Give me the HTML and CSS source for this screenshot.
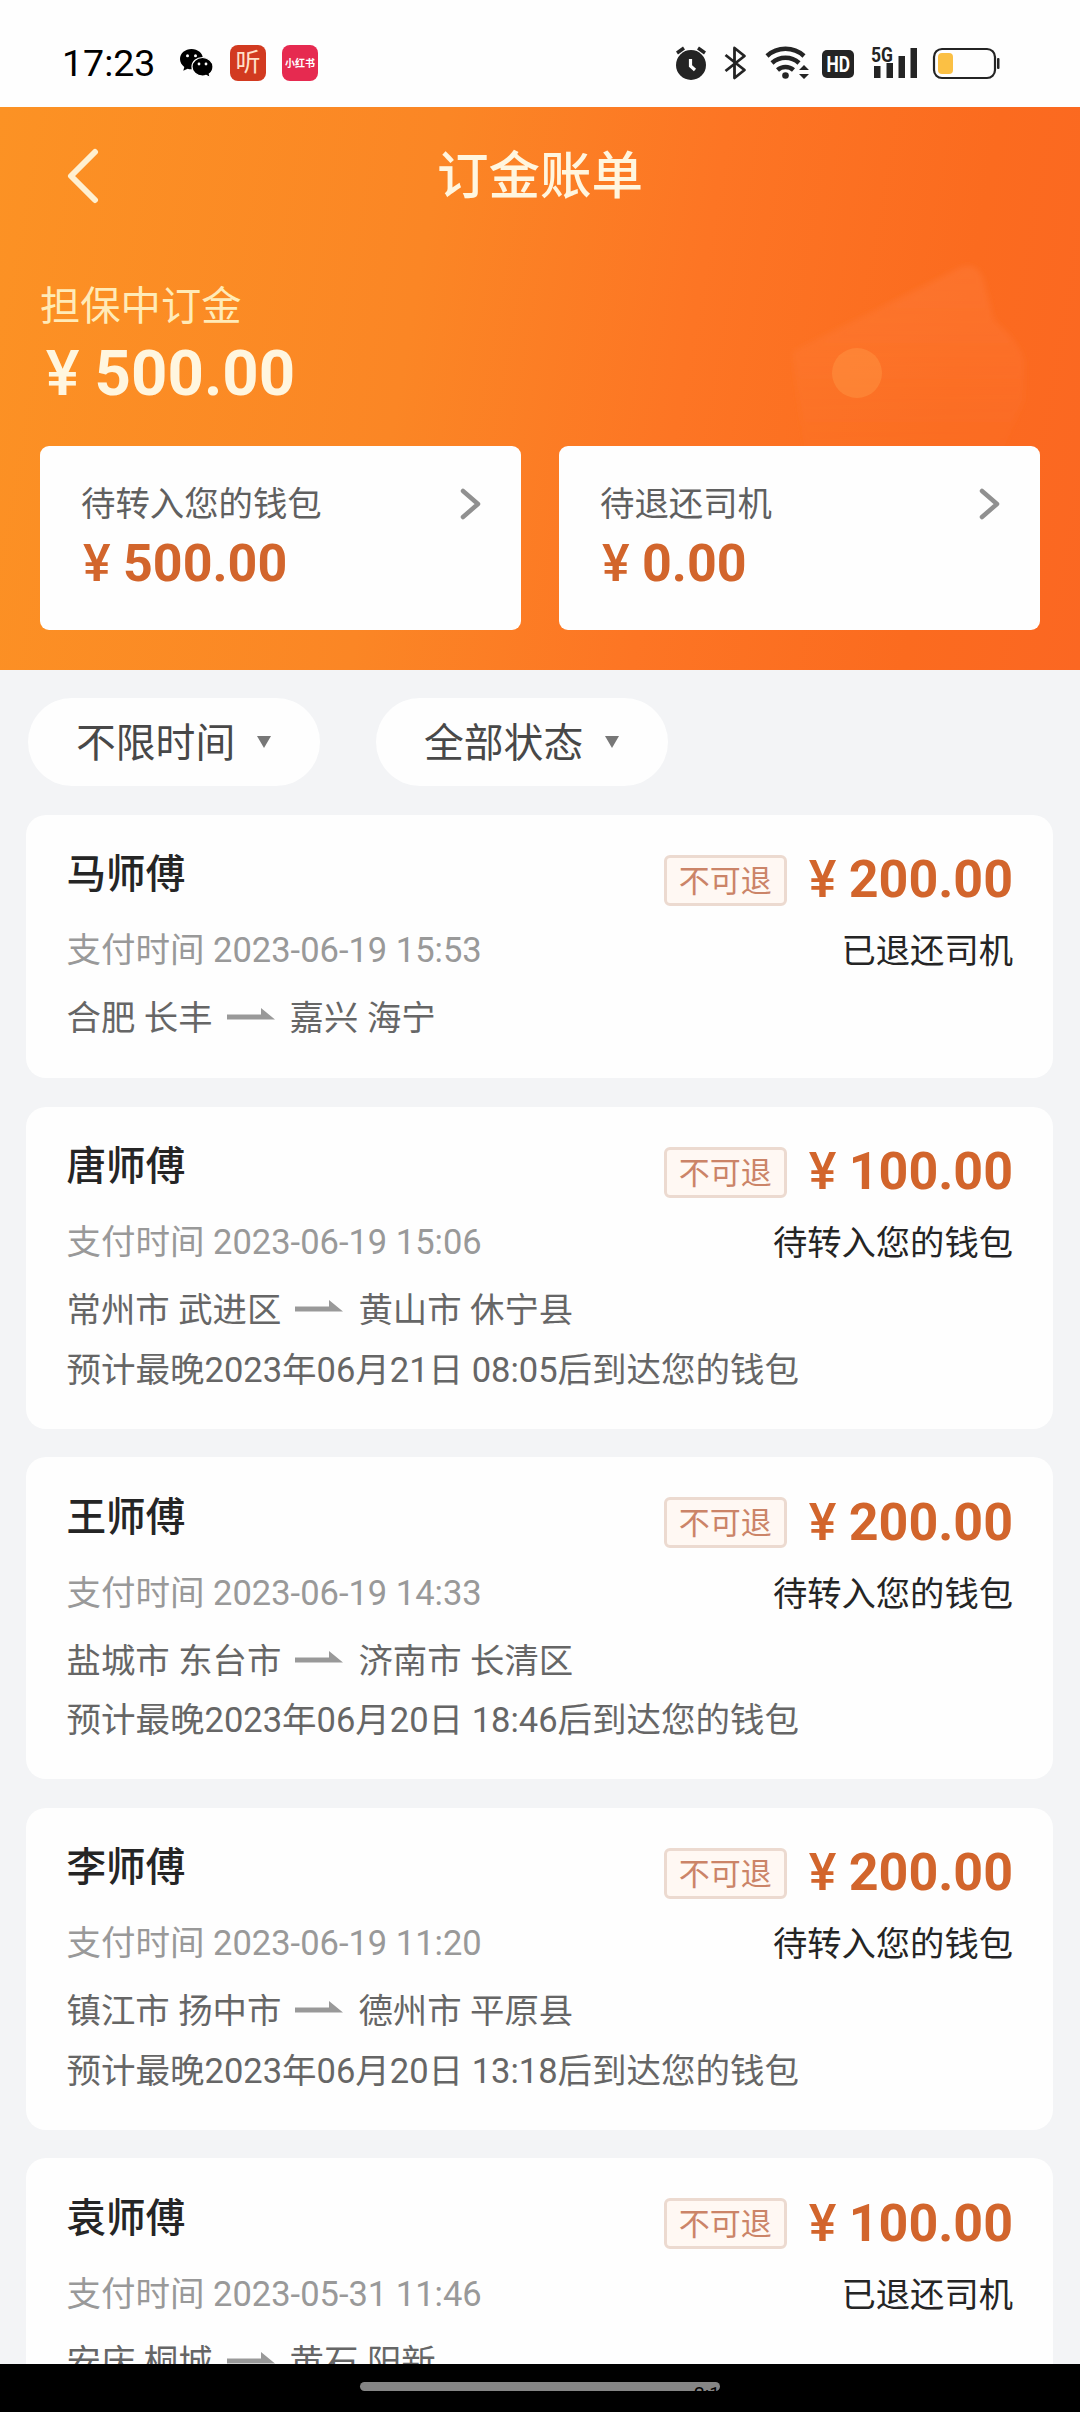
FILE: index.html
```html
<!DOCTYPE html>
<html lang="zh-CN">
<head>
<meta charset="utf-8">
<title>订金账单</title>
<link rel="stylesheet" href="styles.css">
</head>
<body>
<div class="phone">
  <div class="status-bar">
    <span class="clock">17:23</span>
    <svg class="wechat" width="34" height="30" viewBox="0 0 34 30">
      <path d="M11.5 1C5.200 1 0 5.300 0 11c0 3.200 1.700 6 4.300 7.900L3.300 22.800l4.300-2.100c1.300.4 2.600.6 3.900.6 6.300 0 11.500-4.500 11.500-10.300S17.800 1 11.500 1z"/>
      <path d="M22.500 9.500c-5.900 0-10.500 4.200-10.500 9.200s4.600 9.300 10.500 9.300c1.300 0 2.500-.2 3.600-.6l4.200 2.200-1-3.600c2.400-1.800 3.700-4.400 3.700-7.300 0-5-4.600-9.200-10.500-9.200z" stroke="#fff" stroke-width="1.200"/>
      <g fill="#fff"><circle cx="7.500" cy="7.800" r="1.500"/><circle cx="15.500" cy="7.800" r="1.500"/><circle cx="19" cy="16" r="1.400"/><circle cx="26" cy="16" r="1.400"/></g>
    </svg>
    <span class="app app-ting">听</span>
    <span class="app app-xhs">小红书</span>
    <svg class="system" width="326" height="38" viewBox="675 43 326 38" fill="#242424">
      <circle cx="691" cy="64" r="15"/>
      <path d="M677 52l7-5M705 52l-7-5" stroke="#242424" stroke-width="3.400" fill="none"/>
      <path d="M690.500 58v7l4.500 4" stroke="#fff" stroke-width="3.200" fill="none"/>
      <path d="M725.500 54l19 15-10 8V47l10 8-19 15" stroke="#242424" stroke-width="2.800" fill="none" stroke-linejoin="round"/>
      <g fill="none" stroke="#242424" stroke-width="4.500">
        <path d="M767 55a27.500 27.500 0 0 1 37 0"/><path d="M772 62a20 20 0 0 1 27 0"/><path d="M777.500 69a12 12 0 0 1 16 0"/>
      </g>
      <circle cx="785.500" cy="74.500" r="3.300"/>
      <path d="M799 69l5-5 5 5zM799 73h10l-5 5z"/>
      <rect x="822" y="49" width="32" height="28" rx="5"/>
      <text x="826.500" y="71" class="hd" textLength="23.500" lengthAdjust="spacingAndGlyphs">HD</text>
      <text x="871" y="60.500" class="net" textLength="22" lengthAdjust="spacingAndGlyphs">5G</text>
      <path d="M874 65h6.500v12H874zM886.500 62h6.500v15h-6.500zM898.500 55h6.500v22h-6.500zM910.500 47h6.500v30h-6.500z"/>
      <rect x="934" y="48" width="61" height="29" rx="8" fill="none" stroke="#242424" stroke-width="2.200"/>
      <rect x="938" y="52" width="15" height="21" rx="4" fill="#fbc044"/>
      <rect x="997" y="57" width="2.500" height="11" rx="1"/>
    </svg>
  </div>

  <header class="hero">
    <svg class="hero-art" width="250" height="220" viewBox="0 0 250 220">
      <defs>
        <linearGradient id="ticket" x1="0" y1="0" x2="0" y2="1">
          <stop offset="0" stop-color="#ff8448" stop-opacity=".34"/>
          <stop offset="1" stop-color="#ff8448" stop-opacity="0"/>
        </linearGradient>
        <filter id="soft"><feGaussianBlur stdDeviation="3"/></filter>
      </defs>
      <path d="M2 92L170 8q14-6 22 8l12 44q24 20 30 40v40l-26 60-80 20-110-6z" fill="url(#ticket)" filter="url(#soft)"/>
      <circle cx="67" cy="113" r="25" fill="#ff9a48" opacity=".42"/>
    </svg>
    <div class="nav">
      <svg class="back" width="34" height="56" viewBox="0 0 34 56"><path d="M29 4L5 28l24 24"/></svg>
      <h1 class="title">订金账单</h1>
    </div>
    <div class="held-label">担保中订金</div>
    <div class="held-amount"><span class="yen">¥</span>500.00</div>
    <div class="wallets">
      <div class="wallet">
        <div class="wallet-head"><span>待转入您的钱包</span><svg class="more" width="22" height="32" viewBox="0 0 22 32"><path d="M3 3l15 13L3 29"/></svg></div>
        <div class="amount"><span class="yen">¥</span>500.00</div>
      </div>
      <div class="wallet">
        <div class="wallet-head"><span>待退还司机</span><svg class="more" width="22" height="32" viewBox="0 0 22 32"><path d="M3 3l15 13L3 29"/></svg></div>
        <div class="amount"><span class="yen">¥</span>0.00</div>
      </div>
    </div>
  </header>

  <main class="content">
    <div class="filters">
      <div class="filter"><span>不限时间</span><i class="caret"></i></div>
      <div class="filter"><span>全部状态</span><i class="caret"></i></div>
    </div>

    <article class="bill">
      <div class="info">
        <div class="name">马师傅</div>
        <div class="paid">支付时间 2023-06-19 15:53</div>
        <div class="route">合肥 长丰<svg class="arrow" width="48" height="12" viewBox="0 0 48 12"><path d="M0 6.500h34V0l14 11.500H0z"/></svg>嘉兴 海宁</div>
      </div>
      <div class="side">
        <div class="price"><span class="badge">不可退</span><div class="amount"><span class="yen">¥</span>200.00</div></div>
        <div class="state">已退还司机</div>
      </div>
    </article>

    <article class="bill">
      <div class="info">
        <div class="name">唐师傅</div>
        <div class="paid">支付时间 2023-06-19 15:06</div>
        <div class="route">常州市 武进区<svg class="arrow" width="48" height="12" viewBox="0 0 48 12"><path d="M0 6.500h34V0l14 11.500H0z"/></svg>黄山市 休宁县</div>
        <div class="eta">预计最晚2023年06月21日 08:05后到达您的钱包</div>
      </div>
      <div class="side">
        <div class="price"><span class="badge">不可退</span><div class="amount"><span class="yen">¥</span>100.00</div></div>
        <div class="state">待转入您的钱包</div>
      </div>
    </article>

    <article class="bill">
      <div class="info">
        <div class="name">王师傅</div>
        <div class="paid">支付时间 2023-06-19 14:33</div>
        <div class="route">盐城市 东台市<svg class="arrow" width="48" height="12" viewBox="0 0 48 12"><path d="M0 6.500h34V0l14 11.500H0z"/></svg>济南市 长清区</div>
        <div class="eta">预计最晚2023年06月20日 18:46后到达您的钱包</div>
      </div>
      <div class="side">
        <div class="price"><span class="badge">不可退</span><div class="amount"><span class="yen">¥</span>200.00</div></div>
        <div class="state">待转入您的钱包</div>
      </div>
    </article>

    <article class="bill">
      <div class="info">
        <div class="name">李师傅</div>
        <div class="paid">支付时间 2023-06-19 11:20</div>
        <div class="route">镇江市 扬中市<svg class="arrow" width="48" height="12" viewBox="0 0 48 12"><path d="M0 6.500h34V0l14 11.500H0z"/></svg>德州市 平原县</div>
        <div class="eta">预计最晚2023年06月20日 13:18后到达您的钱包</div>
      </div>
      <div class="side">
        <div class="price"><span class="badge">不可退</span><div class="amount"><span class="yen">¥</span>200.00</div></div>
        <div class="state">待转入您的钱包</div>
      </div>
    </article>

    <article class="bill">
      <div class="info">
        <div class="name">袁师傅</div>
        <div class="paid">支付时间 2023-05-31 11:46</div>
        <div class="route">安庆 桐城<svg class="arrow" width="48" height="12" viewBox="0 0 48 12"><path d="M0 6.500h34V0l14 11.500H0z"/></svg>黄石 阳新</div>
      </div>
      <div class="side">
        <div class="price"><span class="badge">不可退</span><div class="amount"><span class="yen">¥</span>100.00</div></div>
        <div class="state">已退还司机</div>
      </div>
    </article>
  </main>

  <div class="gesture-bar"><div class="handle">2:1</div></div>
</div>
</body>
</html>
```
FILE: styles.css
```css
* { box-sizing: border-box; }

body {
  margin: 0;
  background: #f3f4f6;
  font-family: Roboto, "Noto Sans CJK SC", sans-serif;
  color: #666;
}

.phone {
  display: flex;
  flex-direction: column;
  width: 1080px;
  height: 2412px;
  overflow: hidden;
}

/* System status bar */
.status-bar {
  flex: none;
  display: flex;
  align-items: center;
  height: 107px;
  padding: 18px 79px 0 62px;
  background: #fefefe;
}
.clock { width: 118px; font-size: 37.500px; color: #000; }
.wechat { margin-right: 16px; }
.app {
  display: flex;
  align-items: center;
  justify-content: center;
  width: 36px;
  height: 36px;
  margin-right: 16px;
  border-radius: 8px;
  color: #fff;
  white-space: nowrap;
}
.app-ting { background: #d23a20; font-size: 25px; line-height: 36px; color: #ffe0c8; }
.app-xhs { background: #e62a50; font-size: 10px; font-weight: 700; }
.system { margin-left: auto; }
.hd { font-size: 22px; font-weight: 700; fill: #fff; }
.net { font-size: 21px; font-weight: 700; }

/* Orange header */
.hero {
  position: relative;
  flex: none;
  height: 563px;
  padding: 42px 40px 0;
  background: linear-gradient(100deg, #fc9224 0%, #fb8625 38%, #fd7524 62%, #fb6b1f 85%, #fb6722 100%);
  color: #fff6df;
}
.hero-art { position: absolute; left: 790px; top: 153px; }
.nav {
  position: relative;
  display: flex;
  align-items: center;
  justify-content: center;
  height: 56px;
}
.back { position: absolute; left: 26px; top: -1px; fill: none; stroke: #fff0d0; stroke-width: 6; stroke-linecap: round; stroke-linejoin: round; }
.title { margin: 0; font-size: 51.500px; line-height: 56px; font-weight: 500; }
.held-label { position: relative; margin-top: 76px; font-size: 40.300px; line-height: 52px; color: #ffebb8; font-weight: 400; }
.held-amount { position: relative; display: flex; margin-top: 5px; font-size: 63.500px; line-height: 72px; font-weight: 700; }
.yen { width: .86em; padding-left: .09em; font-weight: 500; }
.wallets { position: relative; display: flex; gap: 38px; margin-top: 36px; }
.wallet { flex: 1; height: 184px; padding: 34px 39px 0 41px; border-radius: 9px; background: #fefefe; }
.wallet-head { display: flex; align-items: center; justify-content: space-between; font-size: 34.400px; line-height: 48px; color: #606060; }
.more { margin-top: -1px; fill: none; stroke: #909090; stroke-width: 4.500; stroke-linecap: round; stroke-linejoin: round; }
.amount { display: flex; font-size: 52px; line-height: 52px; font-weight: 700; color: #d2652c; }
.wallet .amount { margin-top: 10px; padding-left: 2px; }
.amount .yen { padding-left: 0; width: 40px; }

/* Filters and bill list */
.content { flex: 1; min-height: 0; overflow: hidden; display: flex; flex-direction: column; gap: 28.500px; padding: 28px 27px 0 26px; }
.filters { flex: none; display: flex; gap: 56px; padding-left: 2px; }
.filter { display: flex; align-items: center; width: 292px; height: 88px; padding-left: 48px; border-radius: 44px; background: #fefefe; font-size: 39.800px; color: #484848; }
.filter span { padding-bottom: 6px; }
.caret { margin-left: 22px; border: 7px solid transparent; border-top: 12px solid #777; border-bottom: 0; }
.bill { flex: none; display: flex; justify-content: space-between; padding: 34.500px 40px 36px 40.500px; border-radius: 20px; background: #fefefe; font-size: 34.500px; white-space: nowrap; }
.name { font-size: 39.600px; line-height: 52px; font-weight: 500; color: #252525; }
.paid { margin-top: 25px; line-height: 48px; color: #999; }
.route { display: flex; align-items: center; margin-top: 20px; font-size: 34.400px; line-height: 48px; }
.arrow { flex: none; margin: -8px 15px 0 14px; fill: #999; }
.eta { margin-top: 13.500px; line-height: 45px; }
.side { display: flex; flex-direction: column; align-items: flex-end; width: 0; margin-top: 5px; }
.price { display: flex; align-items: center; height: 52px; gap: 22px; }
.badge { height: 51px; padding: 0 12px; border: 3px solid #ecdad0; border-radius: 6px; background: #fff8f3; font-size: 31px; line-height: 48px; color: #cb8468; }
.state { margin-top: 21px; font-size: 34.300px; line-height: 48px; color: #252525; }

/* Gesture navigation */
.gesture-bar { flex: none; display: flex; justify-content: center; height: 48px; padding-top: 18px; background: #000; }
.handle { width: 360px; height: 9px; border-radius: 5px; background: #858585; overflow: hidden; text-align: right; font-size: 19px; line-height: 24px; color: #000; }
```
